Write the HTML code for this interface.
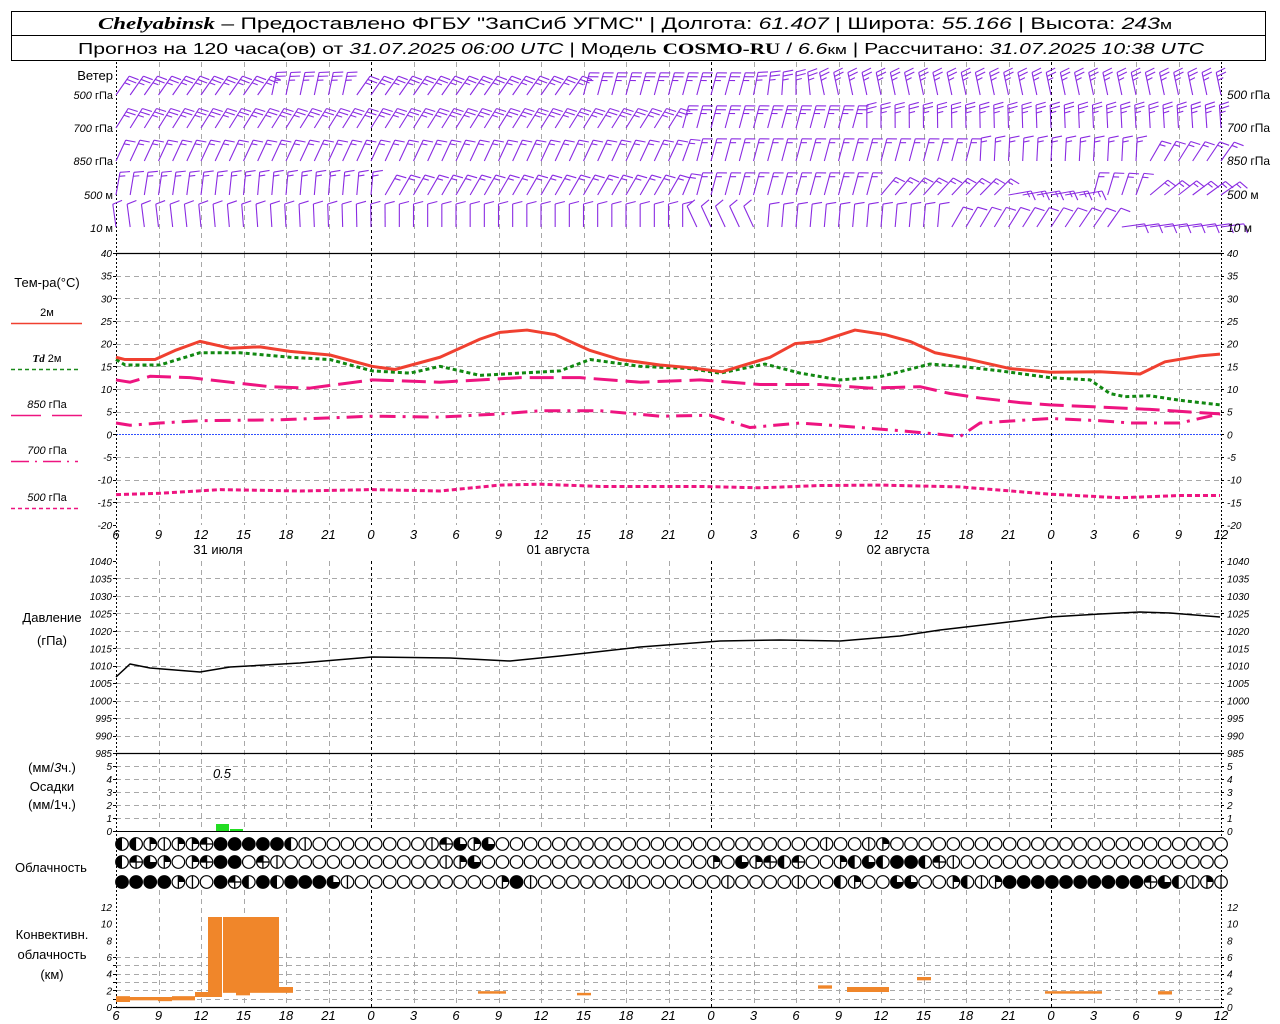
<!DOCTYPE html>
<html><head><meta charset="utf-8"><style>
html,body{margin:0;padding:0;background:#fff;width:1280px;height:1024px;overflow:hidden}
svg{display:block;font-family:"Liberation Sans","DejaVu Sans",sans-serif}
.t{font-size:10px;font-style:italic}
.ax{font-size:13px;font-style:italic}
.lb{font-size:12px}
</style></head><body>
<svg id="s" width="1280" height="1024" xmlns="http://www.w3.org/2000/svg">
<rect x="0" y="0" width="1280" height="1024" fill="#fff"/>
<rect x="11.5" y="11.5" width="1254" height="49" fill="none" stroke="#000"/>
<line x1="11.5" y1="35.5" x2="1265.5" y2="35.5" stroke="#000"/>
<text x="98" y="29" textLength="1074" lengthAdjust="spacingAndGlyphs" font-size="17" fill="#000"><tspan font-family="Liberation Serif" font-style="italic" font-weight="bold">Chelyabinsk</tspan> – Предоставлено ФГБУ "ЗапСиб УГМС" | Долгота: <tspan font-style="italic">61.407</tspan> | Широта: <tspan font-style="italic">55.166</tspan> | Высота: <tspan font-style="italic">243</tspan><tspan font-size="13">м</tspan></text>
<text x="78" y="54" textLength="1126" lengthAdjust="spacingAndGlyphs" font-size="16" fill="#000">Прогноз на 120 часа(ов) от <tspan font-style="italic">31.07.2025 06:00 UTC</tspan>  | Модель <tspan font-family="Liberation Serif" font-weight="bold">COSMO-RU</tspan> / <tspan font-style="italic">6.6</tspan><tspan font-size="13">км</tspan> | Рассчитано: <tspan font-style="italic">31.07.2025 10:38 UTC</tspan></text>
<g id="g"></g>
<g class="lb" text-anchor="end">
<text x="113" y="80" font-size="13">Ветер</text>
<text x="113" y="99" font-size="11"><tspan font-style="italic">500</tspan> гПа</text>
<text x="113" y="132" font-size="11"><tspan font-style="italic">700</tspan> гПа</text>
<text x="113" y="165" font-size="11"><tspan font-style="italic">850</tspan> гПа</text>
<text x="113" y="199" font-size="11"><tspan font-style="italic">500</tspan>  м</text>
<text x="113" y="232" font-size="11"><tspan font-style="italic">10</tspan>    м</text>
</g>
<g class="lb" font-size="11">
<text x="1227" y="99"><tspan font-style="italic">500</tspan> гПа</text>
<text x="1227" y="132"><tspan font-style="italic">700</tspan> гПа</text>
<text x="1227" y="165"><tspan font-style="italic">850</tspan> гПа</text>
<text x="1227" y="199"><tspan font-style="italic">500</tspan>  м</text>
<text x="1227" y="232"><tspan font-style="italic">10</tspan>    м</text>
</g>
<g class="lb" text-anchor="middle">
<text x="47" y="287" font-size="13">Тем-ра(°C)</text>
<text x="47" y="316" font-size="11">2м</text>
<text x="47" y="362" font-size="11"><tspan font-style="italic" font-weight="bold" font-family="Liberation Serif">Td</tspan>  2м</text>
<text x="47" y="408" font-size="11"><tspan font-style="italic">850</tspan> гПа</text>
<text x="47" y="454" font-size="11"><tspan font-style="italic">700</tspan> гПа</text>
<text x="47" y="501" font-size="11"><tspan font-style="italic">500</tspan> гПа</text>
<text x="52" y="622" font-size="13">Давление</text>
<text x="52" y="645" font-size="13">(гПа)</text>
<text x="52" y="772" font-size="13">(мм/<tspan font-style="italic">3</tspan>ч.)</text>
<text x="52" y="791" font-size="13">Осадки</text>
<text x="52" y="809" font-size="13">(мм/1ч.)</text>
<text x="51" y="872" font-size="13">Облачность</text>
<text x="52" y="939" font-size="13">Конвективн.</text>
<text x="52" y="959" font-size="13">облачность</text>
<text x="52" y="979" font-size="13">(км)</text>
</g>
<line x1="11" y1="323.5" x2="82" y2="323.5" stroke="#f04030" stroke-width="1.5"/>
<line x1="11" y1="369.5" x2="78" y2="369.5" stroke="#1a8a1a" stroke-width="1.5" stroke-dasharray="4 3"/>
<line x1="11" y1="415.5" x2="41" y2="415.5" stroke="#ee1480" stroke-width="1.5"/>
<line x1="52" y1="415.5" x2="82" y2="415.5" stroke="#ee1480" stroke-width="1.5"/>
<line x1="11" y1="461.5" x2="78" y2="461.5" stroke="#ee1480" stroke-width="1.5" stroke-dasharray="18 6 2 6"/>
<line x1="11" y1="508.5" x2="78" y2="508.5" stroke="#ee1480" stroke-width="1.5" stroke-dasharray="4 3"/>
<text x="222" y="778" font-size="13" font-style="italic" text-anchor="middle">0.5</text>
<g class="ax" text-anchor="middle">
<text x="116" y="539">6</text><text x="158.5" y="539">9</text><text x="201" y="539">12</text><text x="243.5" y="539">15</text><text x="286" y="539">18</text><text x="328.5" y="539">21</text><text x="371" y="539">0</text><text x="413.5" y="539">3</text><text x="456" y="539">6</text><text x="498.5" y="539">9</text><text x="541" y="539">12</text><text x="583.5" y="539">15</text><text x="626" y="539">18</text><text x="668.5" y="539">21</text><text x="711" y="539">0</text><text x="753.5" y="539">3</text><text x="796" y="539">6</text><text x="838.5" y="539">9</text><text x="881" y="539">12</text><text x="923.5" y="539">15</text><text x="966" y="539">18</text><text x="1008.5" y="539">21</text><text x="1051" y="539">0</text><text x="1093.5" y="539">3</text><text x="1136" y="539">6</text><text x="1178.5" y="539">9</text><text x="1221" y="539">12</text>
<text x="116" y="1020">6</text><text x="158.5" y="1020">9</text><text x="201" y="1020">12</text><text x="243.5" y="1020">15</text><text x="286" y="1020">18</text><text x="328.5" y="1020">21</text><text x="371" y="1020">0</text><text x="413.5" y="1020">3</text><text x="456" y="1020">6</text><text x="498.5" y="1020">9</text><text x="541" y="1020">12</text><text x="583.5" y="1020">15</text><text x="626" y="1020">18</text><text x="668.5" y="1020">21</text><text x="711" y="1020">0</text><text x="753.5" y="1020">3</text><text x="796" y="1020">6</text><text x="838.5" y="1020">9</text><text x="881" y="1020">12</text><text x="923.5" y="1020">15</text><text x="966" y="1020">18</text><text x="1008.5" y="1020">21</text><text x="1051" y="1020">0</text><text x="1093.5" y="1020">3</text><text x="1136" y="1020">6</text><text x="1178.5" y="1020">9</text><text x="1221" y="1020">12</text>
</g>
<g font-size="13" text-anchor="middle">
<text x="218" y="554">31 июля</text><text x="558" y="554">01 августа</text><text x="898" y="554">02 августа</text>
</g>
<g class="t" text-anchor="end">
<text x="112" y="257">40</text><text x="112" y="279.7">35</text><text x="112" y="302.3">30</text><text x="112" y="325">25</text><text x="112" y="347.7">20</text><text x="112" y="370.3">15</text><text x="112" y="393">10</text><text x="112" y="415.7">5</text><text x="112" y="438.3">0</text><text x="112" y="461">-5</text><text x="112" y="483.7">-10</text><text x="112" y="506.3">-15</text><text x="112" y="529">-20</text>
<text x="112" y="565">1040</text><text x="112" y="582.5">1035</text><text x="112" y="599.9">1030</text><text x="112" y="617.4">1025</text><text x="112" y="634.8">1020</text><text x="112" y="652.3">1015</text><text x="112" y="669.7">1010</text><text x="112" y="687.2">1005</text><text x="112" y="704.6">1000</text><text x="112" y="722.1">995</text><text x="112" y="739.5">990</text><text x="112" y="757">985</text>
<text x="112" y="770">5</text><text x="112" y="783">4</text><text x="112" y="796">3</text><text x="112" y="809">2</text><text x="112" y="822">1</text><text x="112" y="835">0</text>
<text x="112" y="911">12</text><text x="112" y="927.7">10</text><text x="112" y="944.3">8</text><text x="112" y="961">6</text><text x="112" y="977.7">4</text><text x="112" y="994.3">2</text><text x="112" y="1011">0</text>
</g>
<g class="t">
<text x="1227" y="257">40</text><text x="1227" y="279.7">35</text><text x="1227" y="302.3">30</text><text x="1227" y="325">25</text><text x="1227" y="347.7">20</text><text x="1227" y="370.3">15</text><text x="1227" y="393">10</text><text x="1227" y="415.7">5</text><text x="1227" y="438.3">0</text><text x="1227" y="461">-5</text><text x="1227" y="483.7">-10</text><text x="1227" y="506.3">-15</text><text x="1227" y="529">-20</text>
<text x="1227" y="565">1040</text><text x="1227" y="582.5">1035</text><text x="1227" y="599.9">1030</text><text x="1227" y="617.4">1025</text><text x="1227" y="634.8">1020</text><text x="1227" y="652.3">1015</text><text x="1227" y="669.7">1010</text><text x="1227" y="687.2">1005</text><text x="1227" y="704.6">1000</text><text x="1227" y="722.1">995</text><text x="1227" y="739.5">990</text><text x="1227" y="757">985</text>
<text x="1227" y="770">5</text><text x="1227" y="783">4</text><text x="1227" y="796">3</text><text x="1227" y="809">2</text><text x="1227" y="822">1</text><text x="1227" y="835">0</text>
<text x="1227" y="911">12</text><text x="1227" y="927.7">10</text><text x="1227" y="944.3">8</text><text x="1227" y="961">6</text><text x="1227" y="977.7">4</text><text x="1227" y="994.3">2</text><text x="1227" y="1011">0</text>
</g>
</svg>
<script>
(function(){
var NS="http://www.w3.org/2000/svg",g=document.getElementById("g");
function el(n,a){var e=document.createElementNS(NS,n);for(var k in a)e.setAttribute(k,a[k]);g.appendChild(e);return e;}
function ln(x1,y1,x2,y2,c,w,d){var a={x1:x1,y1:y1,x2:x2,y2:y2,stroke:c,"stroke-width":w||1};if(d)a["stroke-dasharray"]=d;return el("line",a);}
var X0=116,X1=1221,PH=(X1-X0)/78;
function X(h){return X0+h*PH;}
var GR="#a8a8a8";
for(var k=0;k<=26;k++){var x=Math.round(X0+42.5*k)+0.5;var day=(k%8==6);
 if(k==0||k==26)continue;
 var c=day?"#000":GR,d=day?"3 3":"5 4";
 ln(x,62,x,253,c,1,d);ln(x,253,x,525,c,1,d);ln(x,561,x,831,c,1,d);ln(x,890,x,1007,c,1,d);}
function hg(y){ln(X0,y+0.5,X1,y+0.5,GR,1,"5 4");}
for(var T=35;T>-20;T-=5){if(T!=0)hg(Math.round(253+(40-T)*4.533));}
for(var i=1;i<11;i++)hg(Math.round(561+i*17.45));
for(var i=1;i<=5;i++)hg(831-13*i);
for(var i=1;i<=6;i++)hg(Math.round(1007-i*8.333));
ln(X0,434.5,X1,434.5,"#3050ff",1,"2 1");
ln(X0+0.5,62,X0+0.5,1007,"#000",1,"2 2");ln(X1+0.5,62,X1+0.5,1007,"#000",1,"2 2");
ln(X0,253.5,X1,253.5,"#000",1.2);ln(X0,753.5,X1,753.5,"#000",1.2);ln(X0,1007.5,X1,1007.5,"#000",1.2);
ln(X0,831.5,X1,831.5,"#000",1);
function tk(y){ln(X0-3,y+0.5,X0,y+0.5,"#000",1);ln(X1,y+0.5,X1+3,y+0.5,"#000",1);}
for(var T=40;T>=-20;T-=5)tk(Math.round(253+(40-T)*4.533));
for(var i=0;i<12;i++)tk(Math.round(561+i*17.45));
for(var i=0;i<=5;i++)tk(831-13*i);
for(var i=0;i<=6;i++)tk(Math.round(1007-i*8.333));
function ty(T){return 253+(40-T)*4.533;}
function poly(pts,c,w,d,f){var s="";for(var i=0;i<pts.length;i+=2)s+=pts[i]+","+f(pts[i+1])+" ";var a={points:s,fill:"none",stroke:c,"stroke-width":w,"stroke-linejoin":"round"};if(d)a["stroke-dasharray"]=d;el("polyline",a);}
var MAG="#ee1480";
poly([116,-13.3,160,-13,220,-12.2,300,-12.5,372,-12.2,440,-12.5,500,-11.2,540,-11,600,-11.5,700,-11.5,760,-11.8,820,-11.3,880,-11.2,960,-11.6,1050,-13.2,1120,-14,1180,-13.5,1220,-13.5],MAG,3,"5 3",ty);
poly([116,2.5,130,2,160,2.5,200,3,280,3.2,372,4,440,3.8,500,4.5,540,5.2,600,5.2,660,4,710,4.2,750,1.5,800,2.5,860,1.5,900,0.8,940,0,960,-0.5,980,2.5,1050,3.5,1100,3,1130,2.5,1180,2.5,1220,4.5],MAG,3,"16 7 3 7",ty);
poly([116,12,130,11.5,150,12.8,190,12.5,230,11.5,270,10.5,310,10.2,372,12,440,11.5,520,12.5,580,12.5,640,11.5,700,12,760,11,820,11,870,10.2,920,10.5,950,9,980,8,1020,7,1050,6.5,1100,6,1150,5.5,1220,4.5],MAG,3,"24 8",ty);
poly([116,16.5,125,15.3,160,15.3,200,18,240,18,290,17,330,16.5,372,14,410,13.5,440,15,480,13,520,13.5,560,14,590,16.5,640,15,690,14.5,720,13.5,765,15.5,800,13.5,840,12,880,12.7,930,15.5,960,15,1000,14,1050,12.5,1090,12,1110,9,1125,8.3,1150,8.5,1180,7.5,1220,6.5],"#118811",3,"4 3",ty);
poly([116,17,125,16.5,155,16.5,175,18.5,200,20.5,230,19,260,19.3,290,18.3,330,17.5,372,15,395,14.3,440,17,480,21,500,22.5,527,23,555,22,590,18.5,620,16.5,660,15.3,690,14.7,722,13.8,770,17,795,20,820,20.5,855,23,885,22,910,20.5,935,18,970,16.5,1010,14.5,1050,13.7,1100,13.8,1140,13.3,1165,16,1200,17.3,1220,17.7],"#f04030",3,null,ty);
poly([116,677,130,664,150,668,200,672,230,667,300,663,372,657,450,658,510,661,560,656,640,647,720,641,780,640,840,641,900,636,940,630,1000,623,1050,617,1100,614,1140,612,1170,613,1220,617],"#000",1.5,null,function(v){return v;});
el("rect",{x:216,y:824,width:13,height:7,fill:"#22dd22"});el("rect",{x:230,y:829,width:13,height:2,fill:"#22dd22"});
var OR="#f0862a";function cy(v){return 1007-v*8.333;}
[[116,130,0.6,1.3],[130,158,0.8,1.2],[158,172,0.7,1.2],[172,195,0.8,1.3],[195,208,1.2,1.8],[208,222,1.2,10.8],[223,279,1.7,10.8],[236,250,1.4,1.8],[279,293,1.7,2.4],[478,506,1.6,1.9],[577,591,1.4,1.7],[818,832,2.2,2.6],[847,889,1.8,2.4],[917,931,3.2,3.6],[1045,1102,1.6,1.9],[1158,1172,1.5,1.9]].forEach(function(b){el("rect",{x:b[0],y:cy(b[3]),width:b[1]-b[0],height:cy(b[2])-cy(b[3]),fill:OR});});
var rows=[
"HHqvqqhfffffHv00000000vhtqt000000000000"+"00000000000v00vq000000000000000000000000",
"Hhtq0qhff0hv00000000000vqt0000000000000"+"000q0tqhHh00qHtHffHhv0000000000000000000",
"ffffqv0fhHfHffftv0000000000qfv000000v00"+"0000v0000v00Hq00tt00qHvqffffffffffhtHvqv"];
var cys=[844,862,882];
for(var r=0;r<3;r++){var s=rows[r];for(var i=0;i<=78;i++){var ch=s[i]||"0";var cx=122+i*14.09,cyy=cys[r],R=6.3;
 el("circle",{cx:cx,cy:cyy,r:R,fill:ch=="f"?"#000":"#fff",stroke:"#000","stroke-width":1.2});
 if(ch=="v")ln(cx,cyy-R,cx,cyy+R,"#000",1.3);
 if(ch=="h"){ln(cx-R,cyy,cx+R,cyy,"#000",1.3);ln(cx,cyy-R,cx,cyy+R,"#000",1.3);el("path",{d:"M"+cx+","+(cyy-R)+" A"+R+","+R+" 0 0,0 "+(cx-R)+","+cyy+" L"+cx+","+cyy+"Z",fill:"#000"});}
 if(ch=="H")el("path",{d:"M"+cx+","+(cyy-R)+" A"+R+","+R+" 0 0,0 "+cx+","+(cyy+R)+"Z",fill:"#000"});
 if(ch=="q"){ln(cx,cyy-R,cx,cyy+R,"#000",1.3);el("path",{d:"M"+cx+","+(cyy-R)+" A"+R+","+R+" 0 0,1 "+(cx+R)+","+cyy+" L"+cx+","+cyy+"Z",fill:"#000"});}
 if(ch=="t")el("path",{d:"M"+cx+","+(cyy-R)+" A"+R+","+R+" 0 1,0 "+(cx+R)+","+cyy+" L"+cx+","+cyy+"Z",fill:"#000"});
}}
var PUR="#8a2be2";
var W=[
 {y:95,n:3,a:[0,35,10,35,11,12,16,12,17,35,32,35,33,15,44,15,48,0,50,-12,78,-12]},
 {y:128,n:3,a:[0,32,39,32,40,15,52,15,53,0,78,-4]},
 {y:161,n:2,a:[0,25,39,25,41,15,60,15,61,3,72,3,73,30,78,35]},
 {y:195,n:2,a:[0,10,10,5,18,5,19,30,39,30,41,15,53,15,54,40,62,45,63,80,68,80,69,15,72,20,73,50,78,55]},
 {y:227,n:1,a:[0,-8,20,0,40,0,41,-25,45,-25,46,5,58,5,59,30,70,35,71,82,78,82]}];
function interp(a,h){for(var i=0;i<a.length-2;i+=2){if(h>=a[i]&&h<=a[i+2]){var t=(a[i+2]==a[i])?0:(h-a[i])/(a[i+2]-a[i]);return a[i+1]+t*(a[i+3]-a[i+1]);}}return a[a.length-1];}
W.forEach(function(row){for(var h=0;h<=78;h++){var ang=interp(row.a,h)*Math.PI/180;var bx=X(h),by=row.y,L=23;
 var dx=Math.sin(ang),dy=-Math.cos(ang);var tx=bx+L*dx,ty2=by+L*dy;
 ln(bx,by,tx,ty2,PUR,1.1);
 var ba=ang+Math.PI/2-0.25;var px=Math.sin(ba),py=-Math.cos(ba);
 for(var j=0;j<row.n;j++){var sx=tx-dx*4*j,sy=ty2-dy*4*j;var bl=(j==row.n-1&&row.n>1)?6:10;ln(sx,sy,sx+px*bl,sy+py*bl,PUR,1.1);}
}});
})();
</script>
</body></html>
